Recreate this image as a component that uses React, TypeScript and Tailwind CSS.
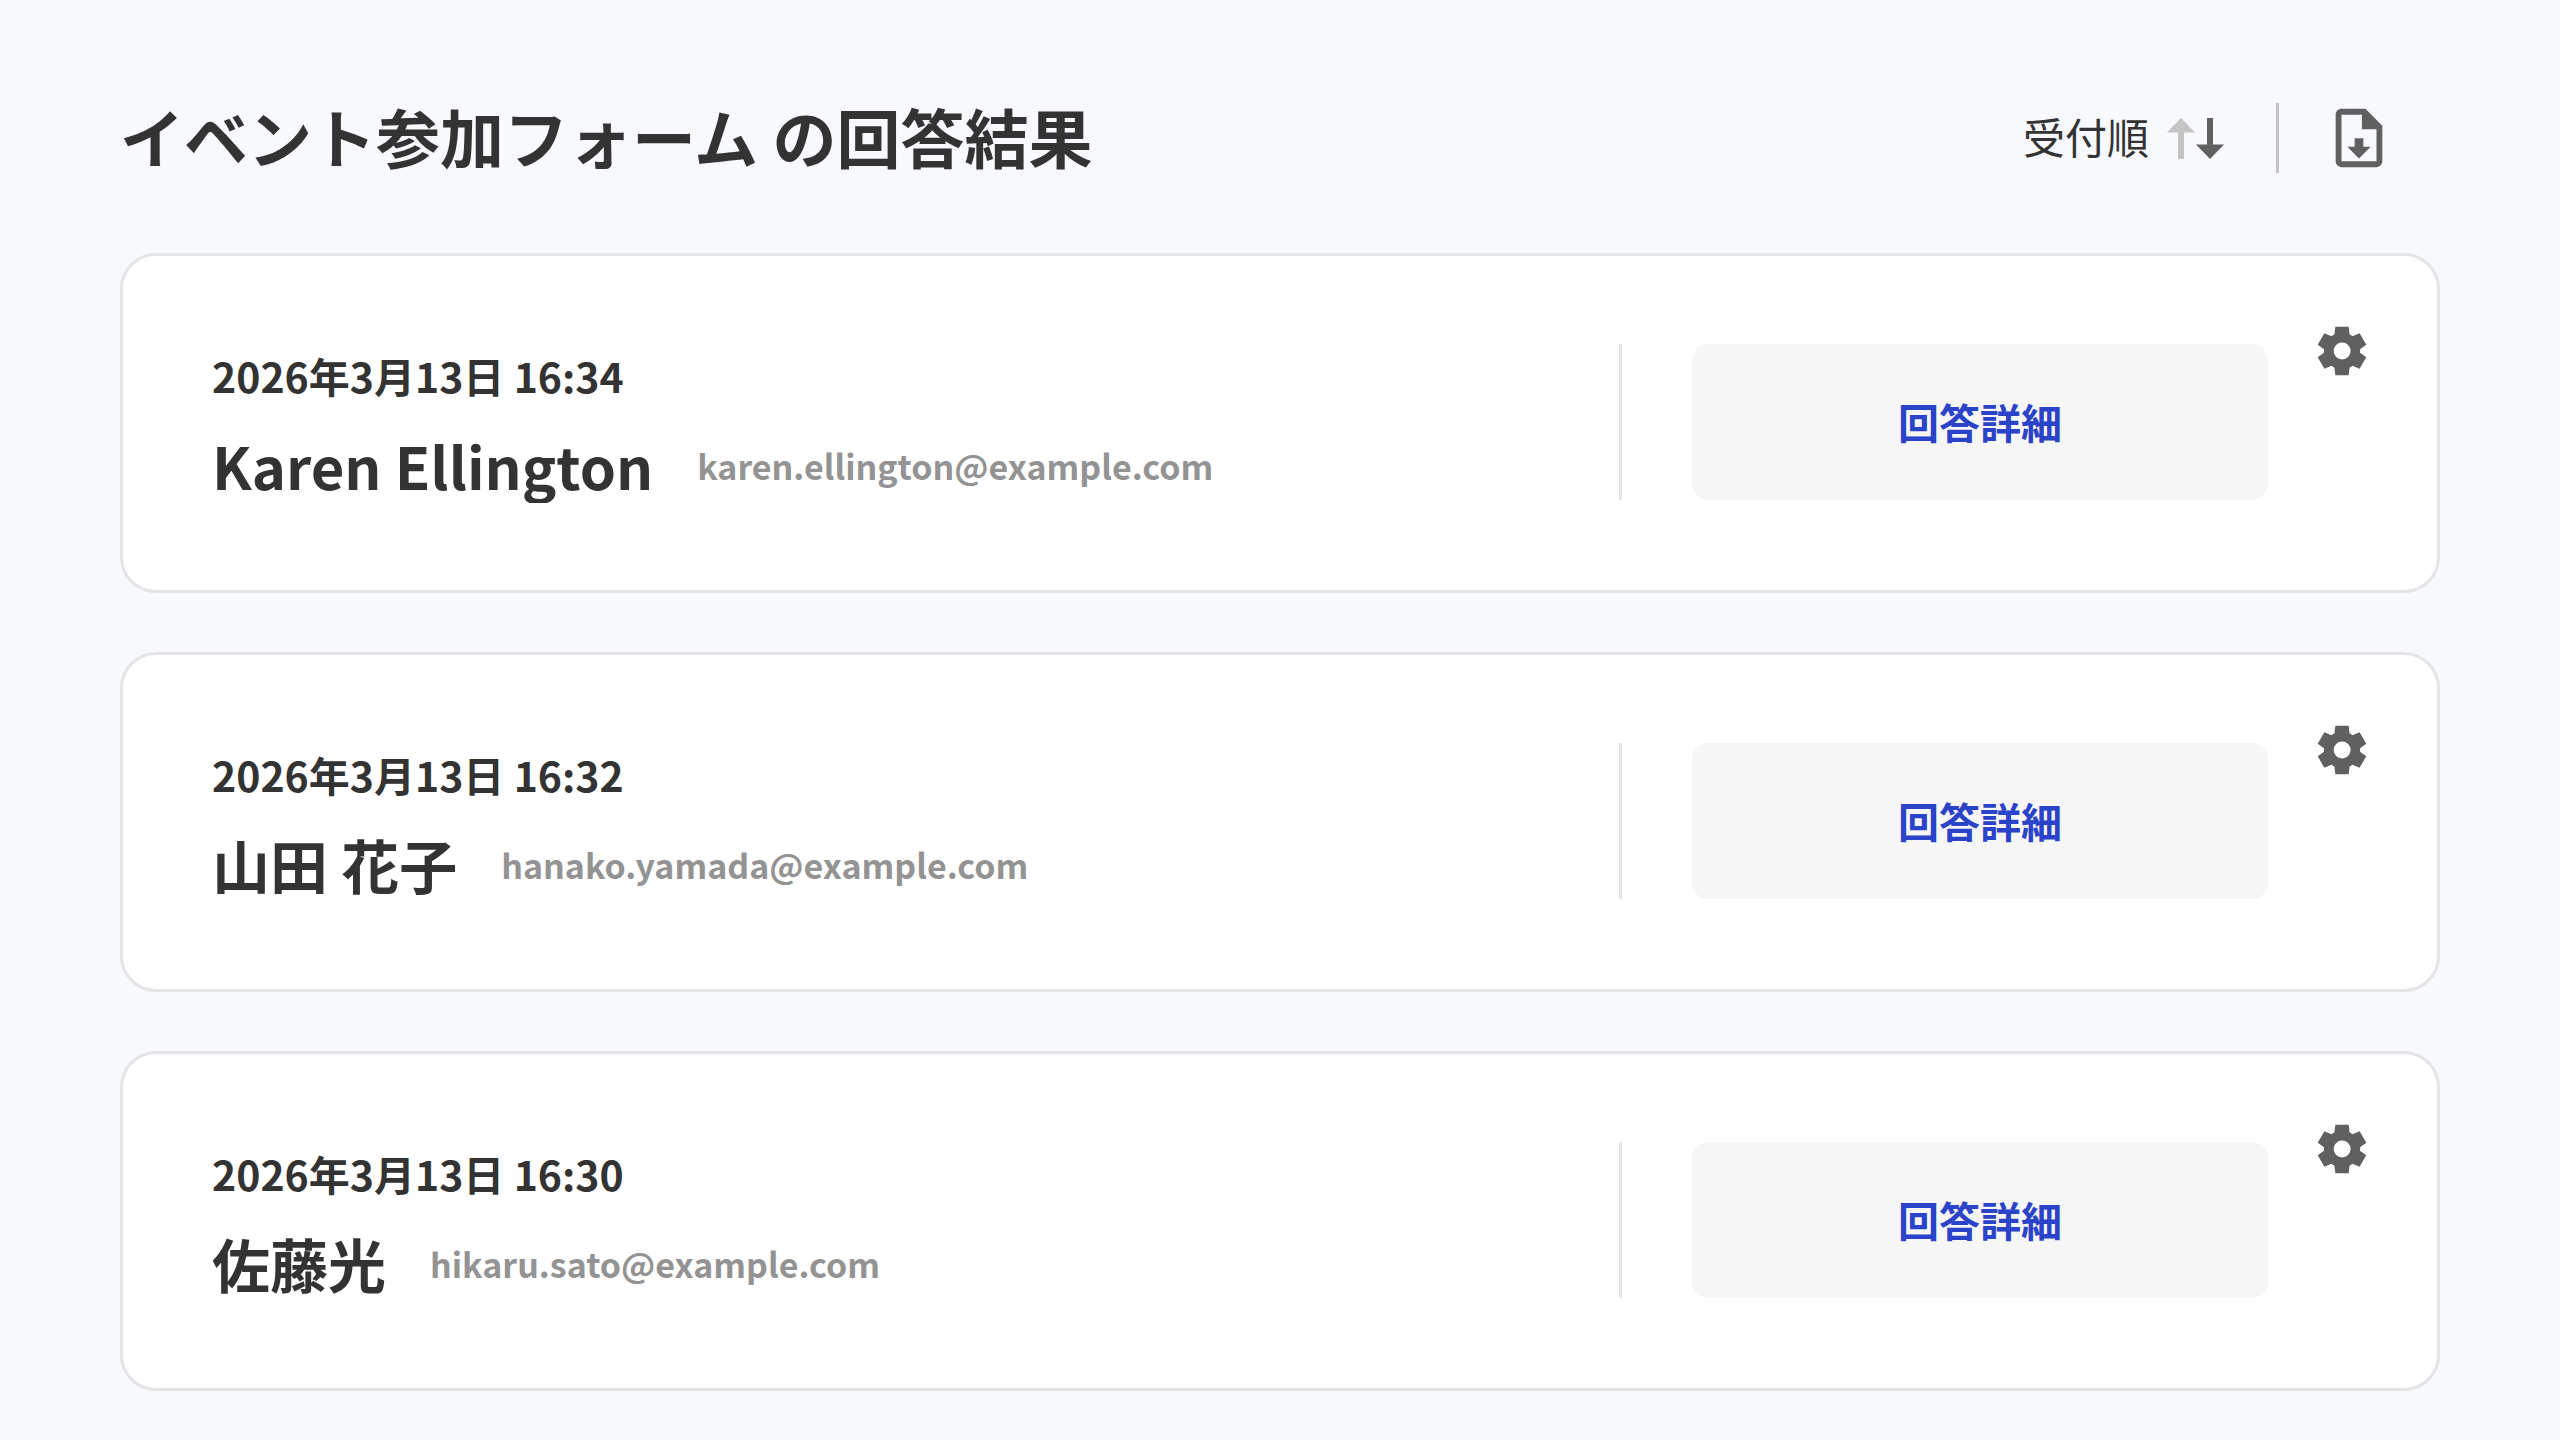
/**
 * フォームの回答結果一覧ページ
 */
import React, { useState } from 'react';

interface Kaito {
  id: number;
  uketsukeNichiji: string;
  namae: string;
  email: string;
}

// 回答データ(受付の新しい順)
const kaitoIchiran: Kaito[] = [
  {
    id: 3,
    uketsukeNichiji: '2026年3月13日 16:34',
    namae: 'Karen Ellington',
    email: 'karen.ellington@example.com'
  },
  {
    id: 2,
    uketsukeNichiji: '2026年3月13日 16:32',
    namae: '山田 花子',
    email: 'hanako.yamada@example.com'
  },
  {
    id: 1,
    uketsukeNichiji: '2026年3月13日 16:30',
    namae: '佐藤光',
    email: 'hikaru.sato@example.com'
  }
];

function SortIcon({ shoujun }: { shoujun: boolean }) {
  return (
    <svg className="w-[57px] h-[41px]" viewBox="0 0 57 41" aria-hidden="true">
      <path
        className={shoujun ? 'fill-[#606060]' : 'fill-[#c4c4c4]'}
        d="M14 0l14 14.5h-11V41h-6V14.5H0z"
      />
      <path
        className={shoujun ? 'fill-[#c4c4c4]' : 'fill-[#606060]'}
        d="M43 41L29 26.5h11V0h6v26.5h11z"
      />
    </svg>
  );
}

function DownloadIcon() {
  return (
    <svg className="size-[70px] fill-[#606060]" viewBox="0 0 24 24" aria-hidden="true">
      <path d="M14.2 2H6c-1.1 0-2 .9-2 2v16c0 1.1.9 2 2 2h12c1.1 0 2-.9 2-2V7.8L14.2 2zM18 20H6V4h7v5h5v11z" />
      <path d="M10.5 12.1h3V15H16l-4 4-4-4h2.5z" />
    </svg>
  );
}

function GearIcon() {
  return (
    <svg className="size-[58px] fill-[#606060]" viewBox="0 -960 960 960" aria-hidden="true">
      <path d="m370-80-16-128q-13-5-24.5-12T307-235l-119 50L78-375l103-78q-1-7-1-13.5v-27q0-6.5 1-13.5L78-585l110-190 119 50q11-8 23-15t24-12l16-128h220l16 128q13 5 24.5 12t22.5 15l119-50 110 190-103 78q1 7 1 13.5v27q0 6.5-2 13.5l103 78-110 190-118-50q-11 8-23 15t-24 12L590-80H370Zm112-260q58 0 99-41t41-99q0-58-41-99t-99-41q-59 0-99.5 41T342-480q0 58 40.5 99t99.5 41Z" />
    </svg>
  );
}

function KaitoCard({ kaito }: { kaito: Kaito }) {
  return (
    <li className="flex items-start bg-white border-3 border-[#e3e4e5] rounded-[36px] pl-[89px] pr-[66px] pt-[88px] pb-[87px]">
      <div className="flex-1 min-w-0">
        <p className="text-[41px] leading-[62px] font-bold">{kaito.uketsukeNichiji}</p>
        <div className="flex items-center gap-11 mt-[22px]">
          <h2 className="text-[58px] leading-[75px] font-bold truncate">{kaito.namae}</h2>
          <p className="text-[34px] leading-[75px] font-bold text-[#939393] truncate">{kaito.email}</p>
        </div>
      </div>
      <div className="border-l-3 border-[#e3e4e5] pl-[70px]">
        <button className="block w-[576px] h-[156px] rounded-2xl bg-[#f6f6f6] text-[#2a43c8] text-[41px] font-bold hover:bg-gray-200 transition-colors cursor-pointer">
          回答詳細
        </button>
      </div>
      <button className="ml-[45px] -mt-[22px] cursor-pointer" aria-label="設定">
        <GearIcon />
      </button>
    </li>
  );
}

export default function App() {
  const [shoujun, setShoujun] = useState(false);

  const narabekae = shoujun ? [...kaitoIchiran].reverse() : kaitoIchiran;

  return (
    <main className="min-h-screen bg-[#f8f9fd] px-[120px] pt-[103px] pb-12 text-[#333333] font-['Noto_Sans_CJK_JP',sans-serif]">
      {/* 見出しと操作 */}
      <header className="flex items-start justify-between pr-[46px]">
        <h1 className="text-[64px] leading-[64px] font-bold">イベント参加フォーム の回答結果</h1>
        <div className="flex items-center">
          <button
            className="flex items-center gap-[18px] text-[42px] cursor-pointer"
            onClick={() => setShoujun(!shoujun)}
          >
            <span className="pb-1 leading-[64px]">受付順</span>
            <SortIcon shoujun={shoujun} />
          </button>
          <div className="w-[3px] h-[70px] bg-[#c4c4c4] ml-[52px] mr-[45px]" />
          <button className="cursor-pointer" aria-label="ダウンロード">
            <DownloadIcon />
          </button>
        </div>
      </header>

      {/* 回答一覧 */}
      <ul className="flex flex-col gap-[59px] mt-20">
        {narabekae.map((kaito) => (
          <KaitoCard key={kaito.id} kaito={kaito} />
        ))}
      </ul>
    </main>
  );
}
